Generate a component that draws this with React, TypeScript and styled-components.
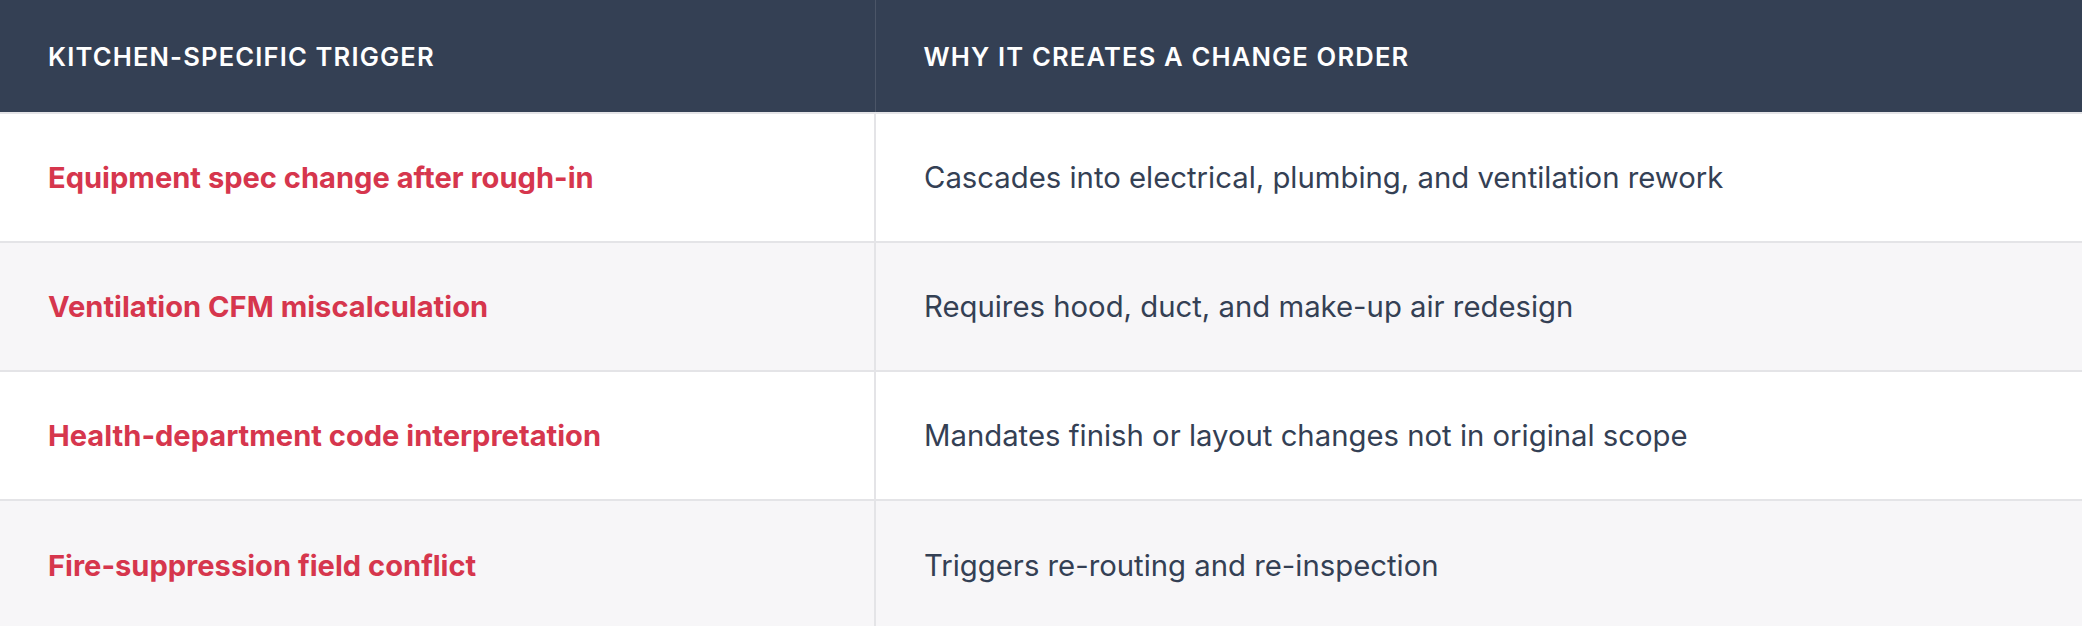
import React from 'react';
import styled, { createGlobalStyle } from 'styled-components';

interface ITrigger {
  trigger: string;
  reason: string;
}

const rows: ITrigger[] = [
  {
    trigger: 'Equipment spec change after rough-in',
    reason: 'Cascades into electrical, plumbing, and ventilation rework',
  },
  {
    trigger: 'Ventilation CFM miscalculation',
    reason: 'Requires hood, duct, and make-up air redesign',
  },
  {
    trigger: 'Health-department code interpretation',
    reason: 'Mandates finish or layout changes not in original scope',
  },
  {
    trigger: 'Fire-suppression field conflict',
    reason: 'Triggers re-routing and re-inspection',
  },
];

const App: React.FC = () => {
  return (
    <>
      <GlobalStyle />
      <Table>
        <colgroup>
          <col style={{ width: '875px' }} />
          <col />
        </colgroup>
        <thead>
          <tr>
            <HeadCell>Kitchen-specific trigger</HeadCell>
            <HeadCell>Why it creates a change order</HeadCell>
          </tr>
        </thead>
        <tbody>
          {rows.map((row, i) => (
            <Row key={row.trigger} $striped={i % 2 === 1}>
              <Cell $accent>{row.trigger}</Cell>
              <Cell>{row.reason}</Cell>
            </Row>
          ))}
        </tbody>
      </Table>
    </>
  );
};

export default App;

const GlobalStyle = createGlobalStyle`
  html, body {
    margin: 0;
    padding: 0;
    background: #ffffff;
  }
  body {
    font-family: Inter, "Noto Sans", "Liberation Sans", sans-serif;
  }
`;

const Table = styled.table`
  width: 100%;
  border-collapse: collapse;
  table-layout: fixed;
`;

const HeadCell = styled.th`
  height: 113px;
  box-sizing: border-box;
  padding: 0 48px;
  background: #344054;
  color: #ffffff;
  text-align: left;
  font-size: 25.6px;
  font-weight: 600;
  letter-spacing: 0.045em;
  text-transform: uppercase;
  border-bottom: 2px solid #e4e4e7;
  & + & {
    border-left: 1px solid #4b5567;
  }
`;

const Row = styled.tr<{ $striped?: boolean }>`
  background: ${(p) => (p.$striped ? '#f7f6f8' : '#ffffff')};
  border-bottom: 2px solid #e4e4e7;
  &:last-child {
    border-bottom: none;
  }
`;

const Cell = styled.td<{ $accent?: boolean }>`
  height: 129px;
  box-sizing: border-box;
  padding: 0 48px;
  vertical-align: middle;
  font-size: ${(p) => (p.$accent ? '29.1px' : '29.3px')};
  font-weight: ${(p) => (p.$accent ? 700 : 400)};
  color: ${(p) => (p.$accent ? '#d6364d' : '#344054')};
  & + & {
    border-left: 2px solid #e4e4e7;
  }
`;
